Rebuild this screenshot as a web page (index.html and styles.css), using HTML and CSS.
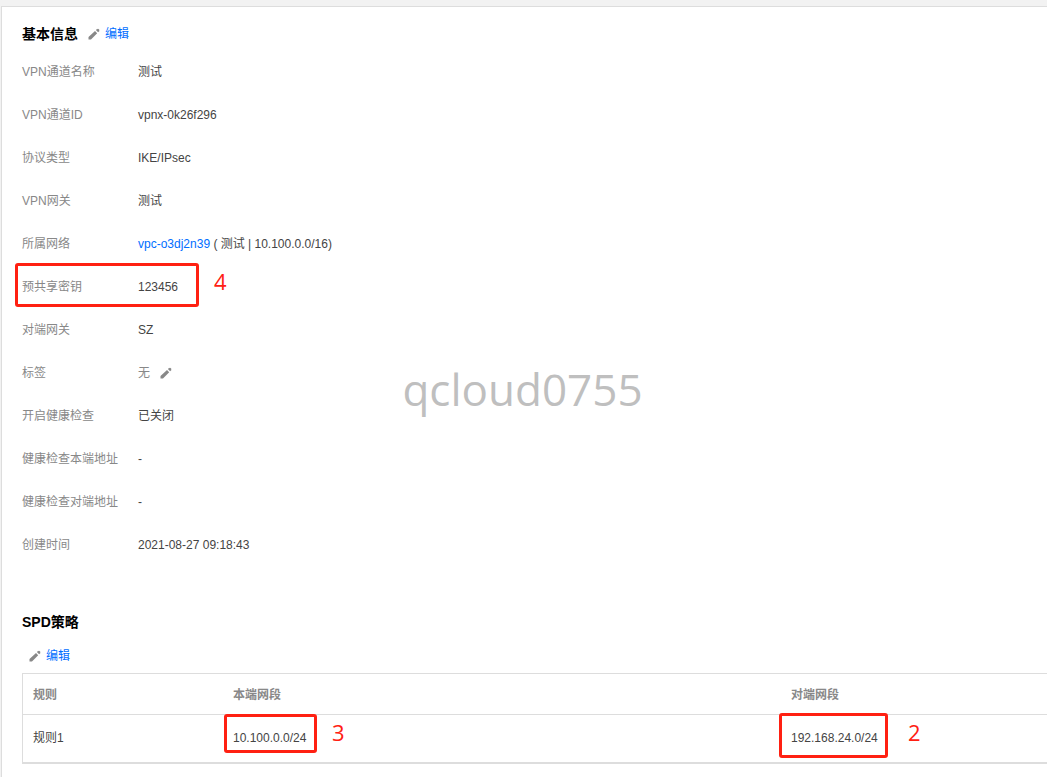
FILE: index.html
```html
<!DOCTYPE html>
<html lang="zh-CN">
<head>
<meta charset="utf-8">
<meta name="viewport" content="width=device-width, initial-scale=1">
<title>基本信息</title>
<link rel="stylesheet" href="styles.css">
</head>
<body>
<svg class="sprite" aria-hidden="true">
  <symbol id="pencil" viewBox="0 0 12 12">
    <path d="M.500 11.500V9L7 3 9.200 5.200 3 11.500zM7.900 2.100L9.300.7 9.800 1.200 10.300.7 11.500 1.900 11 2.400 11.500 2.900 10.100 4.300z"/>
  </symbol>
</svg>
<main class="card">
  <section class="section">
    <header class="section-head">
      <h2 class="title">基本信息</h2>
      <button type="button" class="edit"><svg class="icon"><use href="#pencil"/></svg>编辑</button>
    </header>
    <dl class="info">
      <div class="row"><dt>VPN通道名称</dt><dd>测试</dd></div>
      <div class="row"><dt>VPN通道ID</dt><dd>vpnx-0k26f296</dd></div>
      <div class="row"><dt>协议类型</dt><dd>IKE/IPsec</dd></div>
      <div class="row"><dt>VPN网关</dt><dd>测试</dd></div>
      <div class="row"><dt>所属网络</dt><dd><a href="#">vpc-o3dj2n39</a> ( 测试 | 10.100.0.0/16)</dd></div>
      <div class="row"><dt>预共享密钥</dt><dd>123456</dd><span class="mark mark-key"><b class="num">4</b></span></div>
      <div class="row"><dt>对端网关</dt><dd>SZ</dd></div>
      <div class="row"><dt>标签</dt><dd class="empty">无<button type="button" class="edit edit-tag" aria-label="编辑标签"><svg class="icon"><use href="#pencil"/></svg></button></dd></div>
      <div class="row"><dt>开启健康检查</dt><dd>已关闭</dd></div>
      <div class="row"><dt>健康检查本端地址</dt><dd>-</dd></div>
      <div class="row"><dt>健康检查对端地址</dt><dd>-</dd></div>
      <div class="row"><dt>创建时间</dt><dd>2021-08-27 09:18:43</dd></div>
    </dl>
  </section>
  <section class="section policy">
    <h2 class="title">SPD策略</h2>
    <div class="toolbar">
      <button type="button" class="edit"><svg class="icon"><use href="#pencil"/></svg>编辑</button>
    </div>
    <table class="rules">
      <thead>
        <tr><th class="col-rule" scope="col">规则</th><th class="col-local" scope="col">本端网段</th><th scope="col">对端网段</th></tr>
      </thead>
      <tbody>
        <tr>
          <td>规则1</td>
          <td><span class="cidr">10.100.0.0/24<span class="mark mark-local"><b class="num">3</b></span></span></td>
          <td><span class="cidr">192.168.24.0/24<span class="mark mark-peer"><b class="num">2</b></span></span></td>
        </tr>
      </tbody>
    </table>
  </section>
  <div class="watermark">qcloud0755</div>
</main>
</body>
</html>
```
FILE: styles.css
```css
* { box-sizing: border-box; }

body {
  margin: 0;
  padding: 6px 0 0 1px;
  min-height: 100vh;
  display: flex;
  flex-direction: column;
  background: #f2f2f2;
  color: #444;
  font: 12px/18px "Liberation Sans", "Noto Sans CJK SC", sans-serif;
}

.sprite { display: none; }

.card {
  position: relative;
  flex: 1;
  padding: 17px 0 13px 20px;
  border: solid #ddd;
  border-width: 1px 0 0 1px;
  background: #fff;
}

.section-head {
  display: flex;
  align-items: center;
  gap: 10px;
}

.title {
  margin: 0;
  color: #000;
  font-size: 14px;
  line-height: 20px;
}

.edit {
  display: inline-flex;
  align-items: center;
  gap: 5px;
  padding: 0;
  border: 0;
  background: none;
  color: #006eff;
  font: inherit;
  cursor: pointer;
}

.icon {
  width: 12px;
  height: 12px;
  fill: #888;
}

.info { margin: 6px 0 0; }

.row {
  position: relative;
  display: flex;
  align-items: center;
  height: 43px;
}

.row dt {
  width: 116px;
  color: #888;
}

.row dd { margin: 0; }
.row .empty { color: #888; }
.edit-tag { margin-left: 10px; vertical-align: middle; }

a {
  color: #006eff;
  text-decoration: none;
}

.policy { margin-top: 46px; }

.toolbar {
  display: flex;
  padding: 15px 0 8px 7px;
}

.rules {
  width: 100%;
  table-layout: fixed;
  border-collapse: separate;
  border-spacing: 0;
  border: solid #ddd;
  border-width: 1px 0 2px 1px;
}

.rules th,
.rules td {
  padding: 12px 10px 10px;
  text-align: left;
}

.rules th {
  border-bottom: 1px solid #ddd;
  color: #888;
}

.rules td { padding: 14px 10px 15px; }
.rules .col-rule { width: 200px; }
.rules .col-local { width: 558px; }

.cidr { position: relative; }

/* Numbered callouts drawn over the fields they refer to */
.mark {
  position: absolute;
  border: 3px solid #ff2012;
  border-radius: 3px;
}

.mark-key { left: -7px; top: -2px; width: 184px; height: 44px; }
.mark-local { left: -9px; top: -17px; width: 93px; height: 39px; }
.mark-peer { left: -12px; top: -18px; width: 109px; height: 45px; }

.num {
  position: absolute;
  left: 100%;
  top: 0;
  margin-left: 18px;
  color: #ff2012;
  font: 22px/30px "Open Sans", sans-serif;
}

.mark-peer .num { margin-left: 23px; top: 1px; }

.watermark {
  position: absolute;
  left: 0;
  right: 4px;
  top: 352px;
  color: #bfbfbf;
  font: 44px/60px "Open Sans", sans-serif;
  text-align: center;
  pointer-events: none;
}
```
